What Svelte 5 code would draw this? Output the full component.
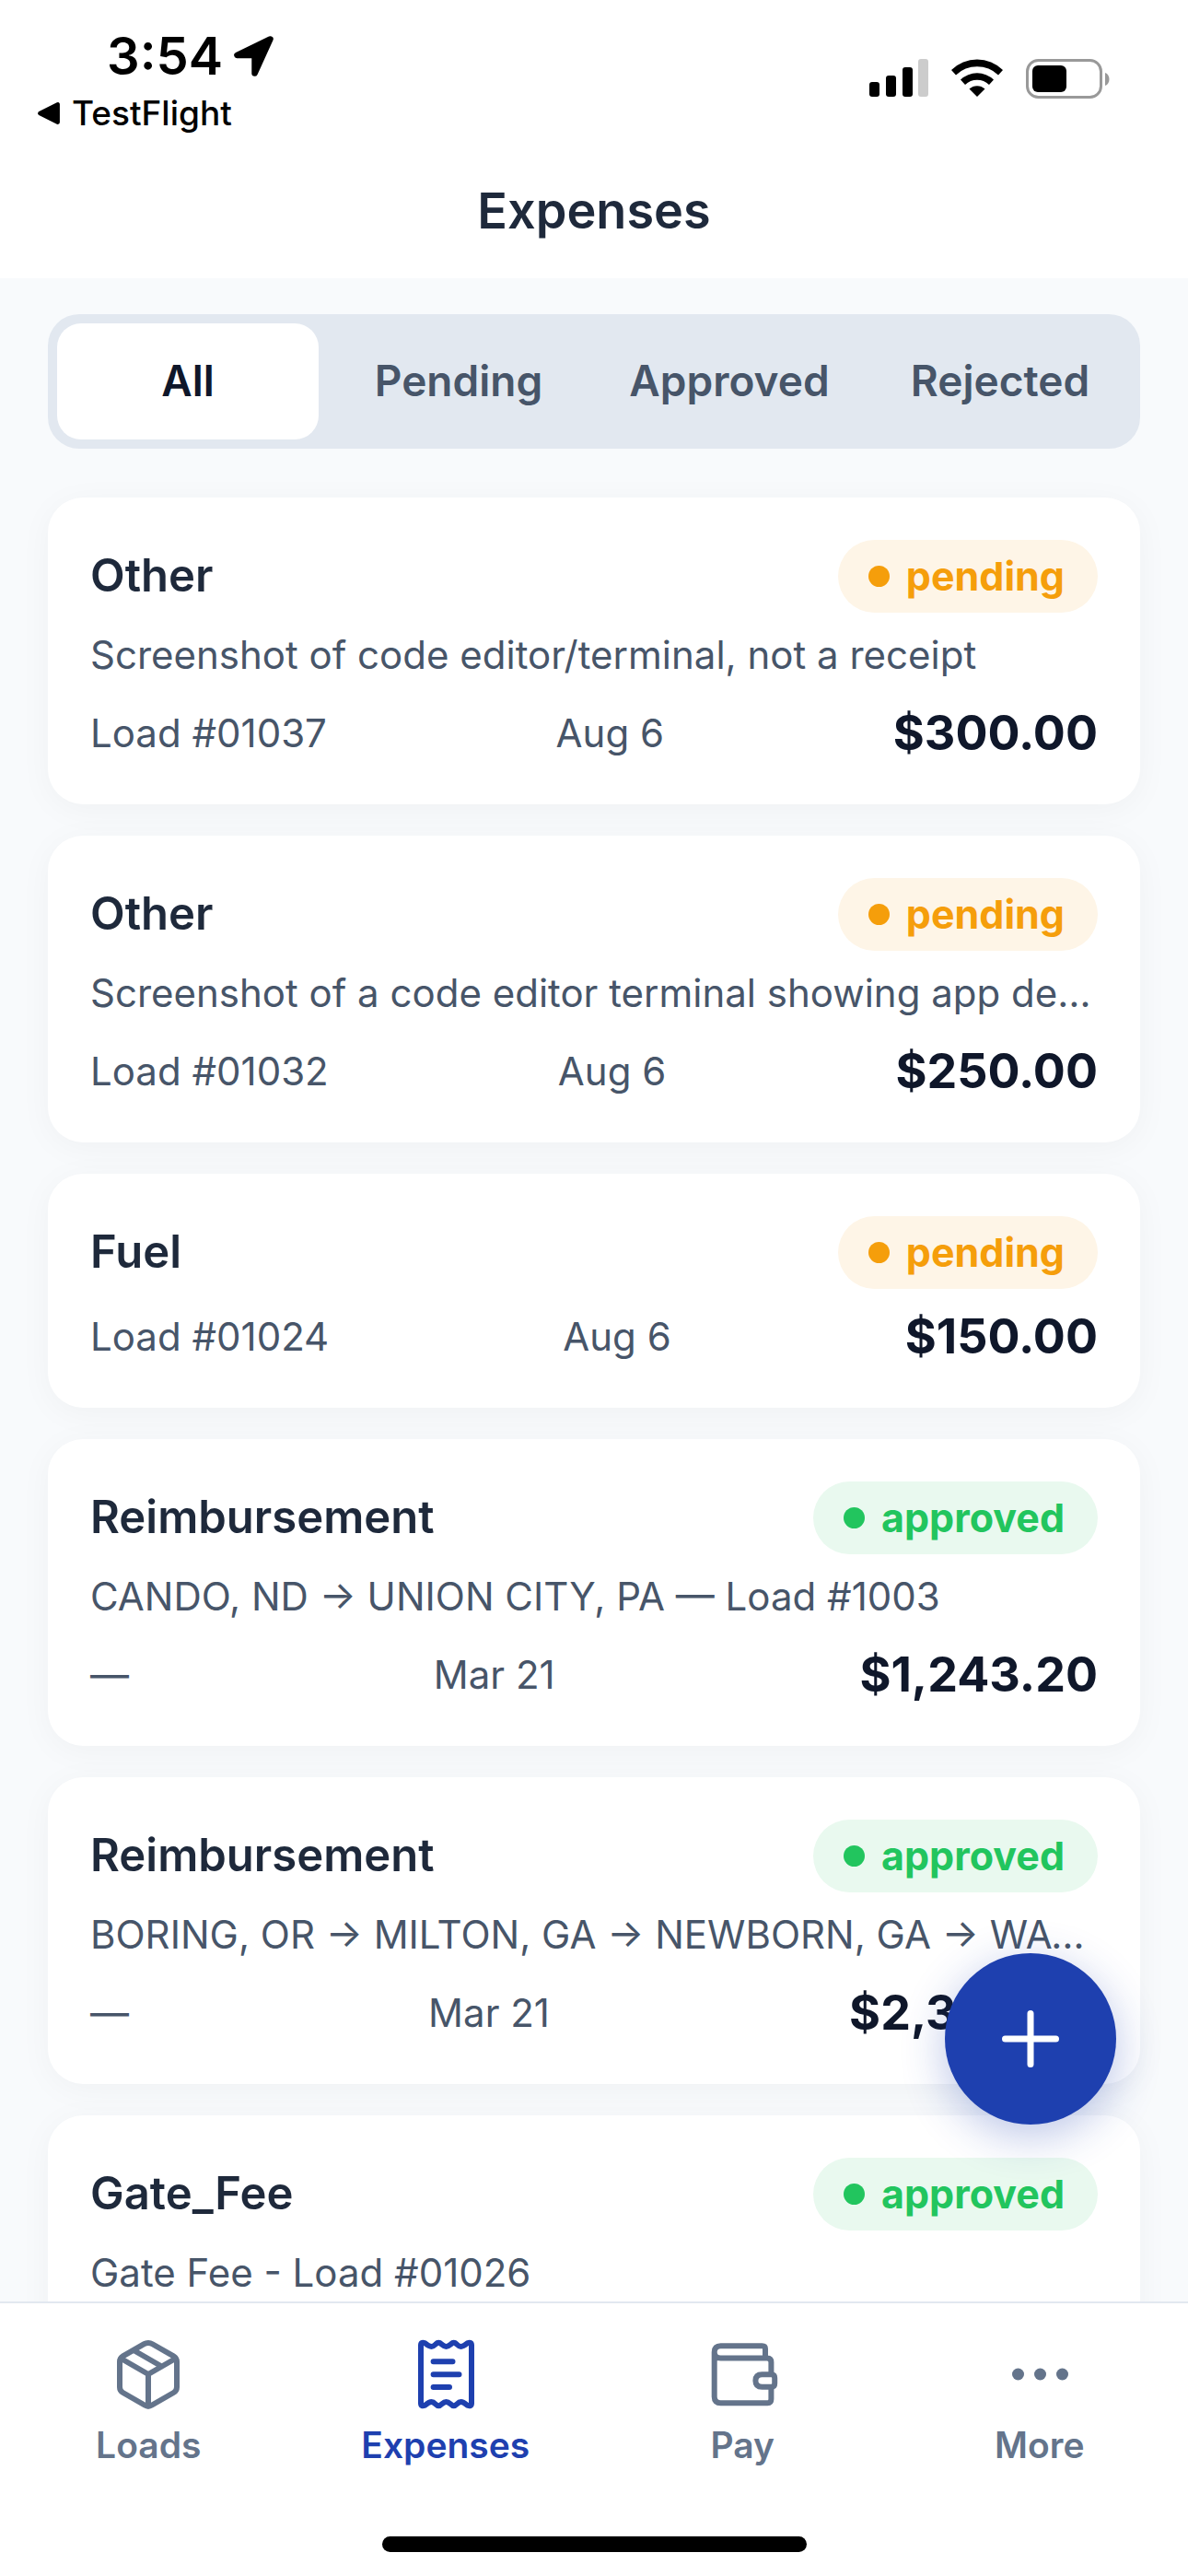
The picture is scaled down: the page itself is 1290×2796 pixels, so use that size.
<script lang="ts">
  type Expense = {
    category: string;
    status: "pending" | "approved";
    description?: string;
    load: string;
    date: string;
    amount: string;
  };

  const filters = ["All", "Pending", "Approved", "Rejected"];
  let active = $state("All");

  const expenses: Expense[] = [
    {
      category: "Other",
      status: "pending",
      description: "Screenshot of code editor/terminal, not a receipt",
      load: "Load #01037",
      date: "Aug 6",
      amount: "$300.00",
    },
    {
      category: "Other",
      status: "pending",
      description: "Screenshot of a code editor terminal showing app deployment",
      load: "Load #01032",
      date: "Aug 6",
      amount: "$250.00",
    },
    {
      category: "Fuel",
      status: "pending",
      load: "Load #01024",
      date: "Aug 6",
      amount: "$150.00",
    },
    {
      category: "Reimbursement",
      status: "approved",
      description: "CANDO, ND → UNION CITY, PA — Load #1003",
      load: "—",
      date: "Mar 21",
      amount: "$1,243.20",
    },
    {
      category: "Reimbursement",
      status: "approved",
      description: "BORING, OR → MILTON, GA → NEWBORN, GA → WACO, TX",
      load: "—",
      date: "Mar 21",
      amount: "$2,380.00",
    },
    {
      category: "Gate_Fee",
      status: "approved",
      description: "Gate Fee - Load #01026",
      load: "Load #01026",
      date: "Mar 20",
      amount: "$25.00",
    },
  ];

  let visible = $derived(
    active === "All"
      ? expenses
      : expenses.filter((e) => e.status === active.toLowerCase()),
  );
</script>

<div class="app">
  <header>
    <div class="status-bar">
      <div class="status-left">
        <div class="clock">
          <span>3:54</span>
          <svg class="location" viewBox="0 0 44 44" aria-hidden="true">
            <path d="M38 5 L5 21 H22.500 V39 Z" />
          </svg>
        </div>
        <a class="back" href="#testflight">
          <svg viewBox="0 0 24 24" aria-hidden="true">
            <path d="M21 3 V21 L3 12 Z" />
          </svg>
          TestFlight
        </a>
      </div>
      <div class="status-right">
        <svg class="signal" viewBox="0 0 64 42" aria-hidden="true">
          <rect x="0" y="25" width="11" height="16" rx="3" />
          <rect x="18" y="18" width="11" height="23" rx="3" />
          <rect x="36" y="9" width="11" height="32" rx="3" />
          <rect class="off" x="53" y="0" width="11" height="41" rx="3" />
        </svg>
        <svg class="wifi" viewBox="0 0 56 42" aria-hidden="true">
          <path d="M0 12 A40 40 0 0 1 56 12 L51 17.500 A33 33 0 0 0 5 17.500 Z" />
          <path d="M10 22.500 A26 26 0 0 1 46 22.500 L41 28 A19 19 0 0 0 15 28 Z" />
          <path d="M19.500 32.500 A12.500 12.500 0 0 1 36.500 32.500 L28 41 Z" />
        </svg>
        <svg class="battery" viewBox="0 0 92 44" aria-hidden="true">
          <rect class="shell" x="1.500" y="1.500" width="80" height="40" rx="12" />
          <rect x="7" y="7" width="37" height="29" rx="6" />
          <path class="nub" d="M86 15 C92 17 92 27 86 29 Z" />
        </svg>
      </div>
    </div>
    <h1>Expenses</h1>
  </header>

  <main>
    <div class="scroll">
      <div class="filters">
        {#each filters as filter}
          <button
            type="button"
            class:active={active === filter}
            aria-pressed={active === filter}
            onclick={() => (active = filter)}
          >
            {filter}
          </button>
        {/each}
      </div>

      <div class="list">
        {#each visible as expense}
          <article>
            <div class="card-head">
              <h2>{expense.category}</h2>
              <span class="badge {expense.status}">
                <i class="dot"></i>
                {expense.status}
              </span>
            </div>
            {#if expense.description}
              <p>{expense.description}</p>
            {/if}
            <div class="card-foot">
              <span>{expense.load}</span>
              <span>{expense.date}</span>
              <strong>{expense.amount}</strong>
            </div>
          </article>
        {/each}
      </div>
    </div>

    <button type="button" class="fab" aria-label="Add expense">
      <svg viewBox="0 0 62 62" aria-hidden="true">
        <path d="M31 3.500 V58.500 M3.500 31 H58.500" />
      </svg>
    </button>
  </main>

  <nav>
    <a href="#loads">
      <svg viewBox="0 0 84 84" aria-hidden="true">
        <path d="M42 8 Q44.500 8 46.500 9.200 L69.500 22.400 Q73 24.500 73 28.500 V56 Q73 60 69.500 62 L46 75.500 Q42 77.800 38 75.500 L14.500 62 Q11 60 11 56 V28.500 Q11 24.500 14.500 22.400 L37.500 9.200 Q39.500 8 42 8 Z" />
        <path d="M12.500 25 L42 42 L71.500 25 M42 42 V76.500 M27 16.500 L56.500 33.500" />
      </svg>
      Loads
    </a>
    <a href="#expenses" class="current" aria-current="page">
      <svg viewBox="0 0 84 84" aria-hidden="true">
        <path d="M15 10.500 Q15 6.500 19.500 8.300 Q24 12 26.500 12 Q28.500 12 31 9.500 Q34.300 6 37.500 9.500 Q40.500 12 42.500 12 Q44.500 12 47.500 9.500 Q50.700 6 54 9.500 Q56.500 12 58.500 12 Q61 12 65.500 8.300 Q70 6.500 70 10.500 V73.500 Q70 77.500 65.500 75.700 Q61 72 58.500 72 Q56.500 72 54 74.500 Q50.700 78 47.500 74.500 Q44.500 72 42.500 72 Q40.500 72 37.500 74.500 Q34.300 78 31 74.500 Q28.500 72 26.500 72 Q24 72 19.500 75.700 Q15 77.500 15 73.500 Z" />
        <path d="M28.600 28.200 H49.500 M28.600 42.200 H56.500 M28.600 56 H46" />
      </svg>
      Expenses
    </a>
    <a href="#pay">
      <svg viewBox="0 0 84 84" aria-hidden="true">
        <path d="M67 24.500 V14.500 Q67 11.200 63.500 11.200 H18.500 Q11.700 11.200 11.700 18 Q11.700 24.500 18.500 24.500 H69 Q73.400 24.500 73.400 29 V42 M73.400 56 V69 Q73.400 73.200 69.500 73.200 H18.500 Q11.700 73.200 11.700 66.500 V18" />
        <path d="M73.500 42.200 H63.500 Q56.400 42.200 56.400 49 Q56.400 55.800 63.500 55.800 H73.500 Q77.200 55.800 77.200 52 V46 Q77.200 42.200 73.500 42.200 Z" />
      </svg>
      Pay
    </a>
    <a href="#more">
      <svg viewBox="0 0 84 84" aria-hidden="true">
        <circle class="solid" cx="18.500" cy="42" r="6.500" />
        <circle class="solid" cx="42.500" cy="42" r="6.500" />
        <circle class="solid" cx="66.500" cy="42" r="6.500" />
      </svg>
      More
    </a>
    <div class="home-indicator"></div>
  </nav>
</div>

<style>
  :global(body) {
    margin: 0;
    background: #f8fafc;
  }

  .app {
    display: flex;
    flex-direction: column;
    height: 100vh;
    font-family: Inter, "Liberation Sans", sans-serif;
    color: #1e293b;
    background: #f8fafc;
  }

  header {
    height: 302px;
    flex: none;
    background: #fff;
  }

  .status-bar {
    display: flex;
    justify-content: space-between;
    padding: 28px 84px 0 40px;
    color: #000;
  }

  .status-left {
    display: flex;
    flex-direction: column;
  }

  .clock {
    display: flex;
    align-items: center;
    gap: 10px;
    padding-left: 76px;
    font-size: 56px;
    line-height: 66px;
    font-weight: 600;
  }

  .location {
    width: 48px;
    height: 48px;
    stroke: #000;
    stroke-width: 6;
    stroke-linejoin: round;
  }

  .back {
    display: flex;
    align-items: center;
    gap: 12px;
    font-size: 37px;
    line-height: 58px;
    font-weight: 500;
    color: #000;
    text-decoration: none;
  }

  .back svg {
    width: 26px;
    height: 26px;
    stroke: #000;
    stroke-width: 4;
    stroke-linejoin: round;
  }

  .status-right {
    display: flex;
    gap: 25px;
    height: 44px;
    padding-top: 36px;
  }

  .signal {
    width: 64px;
    height: 42px;
  }

  .signal .off {
    fill: #ccc;
  }

  .wifi {
    width: 56px;
    height: 42px;
  }

  .battery {
    width: 92px;
    height: 44px;
  }

  .battery .shell {
    fill: none;
    stroke: #999;
    stroke-width: 3;
  }

  .battery .nub {
    fill: #999;
  }

  h1 {
    margin: 42px 0 0;
    font-size: 54px;
    line-height: 70px;
    font-weight: 600;
    text-align: center;
  }

  main {
    position: relative;
    flex: 1;
    min-height: 0;
  }

  .scroll {
    box-sizing: border-box;
    height: 100%;
    padding: 39px 52px 0;
    overflow-y: auto;
    scrollbar-width: none;
  }

  .filters {
    display: grid;
    grid-template-columns: repeat(4, 1fr);
    gap: 10px;
    padding: 10px;
    border-radius: 34px;
    background: #e2e8f0;
  }

  .filters button {
    height: 126px;
    padding: 0 0 3px;
    border: 0;
    border-radius: 26px;
    background: none;
    font: inherit;
    font-size: 46px;
    font-weight: 600;
    color: #475569;
  }

  .filters button.active {
    background: #fff;
    color: #0f172a;
  }

  .list {
    display: flex;
    flex-direction: column;
    gap: 34px;
    padding: 53px 0 34px;
  }

  article {
    padding: 46px;
    border-radius: 38px;
    background: #fff;
    box-shadow: 0 6px 36px rgba(0, 0, 0, 0.04);
  }

  .card-head {
    display: flex;
    align-items: center;
    justify-content: space-between;
    margin-bottom: 21px;
  }

  h2 {
    margin: 0;
    padding-bottom: 1px;
    font-size: 49px;
    line-height: 62px;
    font-weight: 600;
  }

  .badge {
    display: flex;
    align-items: center;
    gap: 18px;
    padding: 0 36px 0 33px;
    border-radius: 40px;
    font-size: 43px;
    line-height: 79px;
    font-weight: 700;
  }

  .dot {
    width: 23px;
    height: 23px;
    border-radius: 50%;
    background: currentColor;
  }

  .pending {
    color: #f59e0b;
    background: #fef5e7;
  }

  .approved {
    color: #22c55e;
    background: #e9f9ef;
  }

  p {
    margin: 0 0 29px;
    overflow: hidden;
    font-size: 42px;
    line-height: 50px;
    color: #475569;
    text-overflow: ellipsis;
    white-space: nowrap;
  }

  .card-foot {
    display: flex;
    align-items: center;
    justify-content: space-between;
    font-size: 42px;
    line-height: 62px;
    color: #475569;
  }

  .card-foot strong {
    font-size: 52px;
    font-weight: 700;
    color: #0f172a;
  }

  .fab {
    position: absolute;
    right: 78px;
    bottom: 192px;
    display: grid;
    place-items: center;
    width: 186px;
    height: 186px;
    padding: 0;
    border: 0;
    border-radius: 50%;
    background: #1e40af;
    box-shadow: 0 12px 48px rgba(30, 64, 175, 0.3);
  }

  .fab svg {
    width: 62px;
    height: 62px;
    fill: none;
    stroke: #fff;
    stroke-width: 7;
    stroke-linecap: round;
  }

  nav {
    display: grid;
    grid-template-columns: repeat(4, 1fr);
    flex: none;
    padding: 35px 0 26px;
    border-top: 2px solid #e2e8f0;
    background: #fff;
  }

  nav a {
    display: flex;
    flex-direction: column;
    align-items: center;
    gap: 10px;
    font-size: 39px;
    line-height: 50px;
    font-weight: 600;
    color: #64748b;
    text-decoration: none;
  }

  nav a.current {
    color: #1e40af;
  }

  nav svg {
    width: 84px;
    height: 84px;
    fill: none;
    stroke: currentColor;
    stroke-width: 6;
    stroke-linecap: round;
    stroke-linejoin: round;
  }

  nav .solid {
    fill: currentColor;
    stroke: none;
  }

  .home-indicator {
    grid-column: 1 / -1;
    justify-self: center;
    width: 461px;
    height: 17px;
    margin-top: 74px;
    border-radius: 9px;
    background: #000;
  }
</style>
